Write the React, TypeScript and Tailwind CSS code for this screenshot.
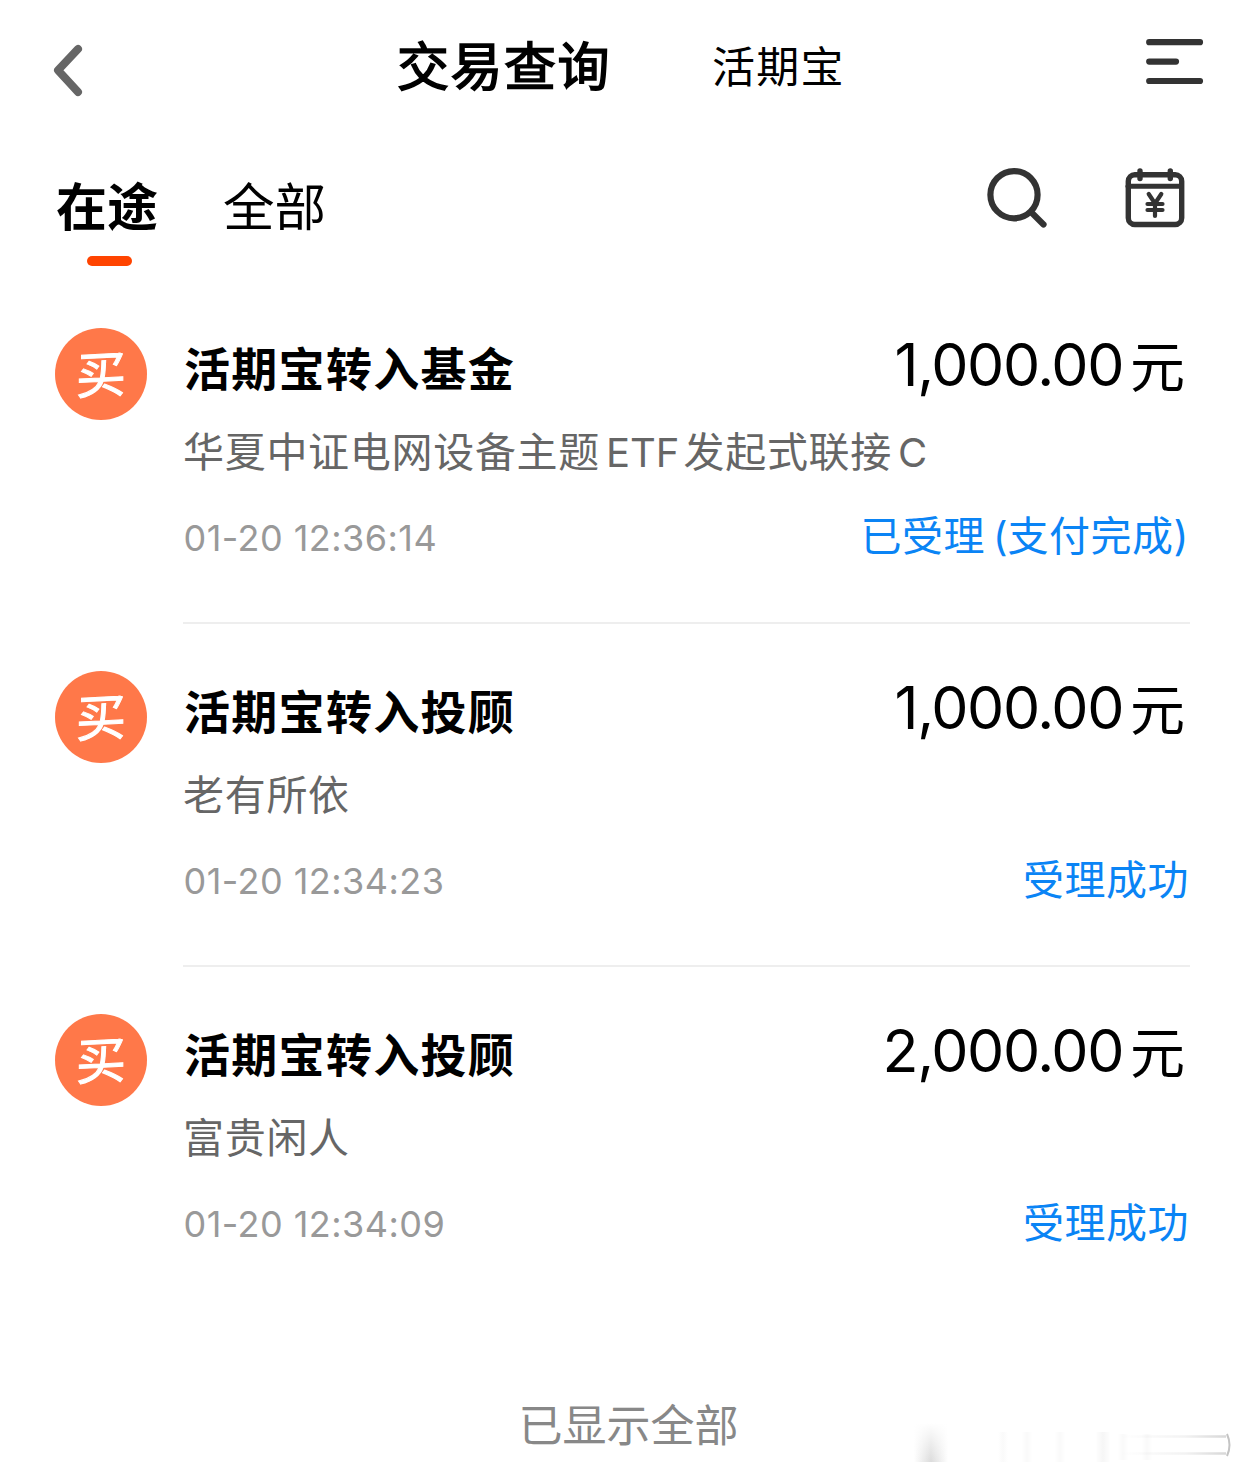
type Trade = {
  title: string
  product: string
  time: string
  amount: string
  status: string
}

const trades: Trade[] = [
  {
    title: "活期宝转入基金",
    product: "华夏中证电网设备主题ETF发起式联接C",
    time: "01-20 12:36:14",
    amount: "1,000.00",
    status: "已受理(支付完成)",
  },
  {
    title: "活期宝转入投顾",
    product: "老有所依",
    time: "01-20 12:34:23",
    amount: "1,000.00",
    status: "受理成功",
  },
  {
    title: "活期宝转入投顾",
    product: "富贵闲人",
    time: "01-20 12:34:09",
    amount: "2,000.00",
    status: "受理成功",
  },
]

function BackIcon() {
  return (
    <svg className="w-[32px] h-[54px]" viewBox="0 0 32 54" fill="none" stroke="#666" strokeWidth="8" strokeLinecap="round">
      <path d="M26 6 6 27.3 26 49" strokeLinejoin="round" />
    </svg>
  )
}

function MenuIcon() {
  return (
    <svg className="w-[58px] h-[46px]" viewBox="0 0 58 46" fill="none" stroke="#333" strokeWidth="6.2" strokeLinecap="round">
      <path d="M3.2 3.2H54M3.2 22.6H30M3.2 42H54" />
    </svg>
  )
}

function SearchIcon() {
  return (
    <svg className="w-[62px] h-[62px]" viewBox="0 0 62 62" fill="none" stroke="#333" strokeLinecap="round">
      <circle cx="28" cy="26.7" r="23.6" strokeWidth="6.2" />
      <path d="M45.5 44.5 57.5 56.5" strokeWidth="6.2" />
    </svg>
  )
}

function CalendarIcon() {
  return (
    <svg className="w-[60px] h-[60px]" viewBox="0 0 60 60" fill="none" stroke="#333" strokeLinecap="round">
      <rect x="3.3" y="6.7" width="53.4" height="49.8" rx="6.5" strokeWidth="5.4" />
      <path d="M3 18.3H56" strokeWidth="5" />
      <path d="M15 3V10.5M45.3 3V10.5" strokeWidth="5.4" />
      <path d="M23.7 26 30 35.5 36.3 26M30 35.5V48M22.5 36H37.5M22.5 42H37.5" strokeWidth="4.2" />
    </svg>
  )
}

// Adds a little air where Latin text meets Chinese text
function MixedText({ text }: { text: string }) {
  return (
    <>
      {text.split(/([A-Z]+|\()/).map((part, i) =>
        i % 2 === 1 ? (
          <span key={i} className={`text-[40px] tracking-normal ${part === "(" ? "ml-[8px]" : "mr-[4px] ml-[6px]"}`}>
            {part}
          </span>
        ) : (
          part
        ),
      )}
    </>
  )
}

function TradeItem({ trade, last }: { trade: Trade; last: boolean }) {
  return (
    <div className="flex h-[343px] pl-[55px] pr-[52px]">
      <div className="mt-[47px] mr-[36px] flex size-[92px] shrink-0 items-center justify-center rounded-full bg-[#ff7849]">
        <span className="-skew-x-3 -rotate-3 pt-[2px] text-[50px] leading-[94px] text-white [-webkit-text-stroke:1px_white]">买</span>
      </div>
      <div className={`flex-1 border-b-2 ${last ? "border-transparent" : "border-[#eeeeee]"}`}>
        <div className="mt-[48px] flex h-[80px] items-center justify-between pl-[1px]">
          <h2 className="text-[46px] leading-[80px] font-bold tracking-[1.3px]">{trade.title}</h2>
          <div className="flex items-start pr-[5px] pb-[4px]">
            <span className="text-[59px] leading-[69px] tracking-[-1.4px]">{trade.amount}</span>
            <span className="ml-[7px] text-[55px] leading-[74px]">元</span>
          </div>
        </div>
        <p className="h-[87px] text-[41px] leading-[87px] tracking-[0.7px] whitespace-nowrap text-[#666]">
          <MixedText text={trade.product} />
        </p>
        <div className="flex h-[82px] items-center justify-between">
          <span className="pt-[2px] pl-[0.5px] text-[36px] leading-[82px] tracking-[0.45px] text-[#999]">{trade.time}</span>
          <span className="pr-[1px] pb-[1px] text-[41px] leading-[80px] tracking-[0.5px] text-[#0a84f5]">
            <MixedText text={trade.status} />
          </span>
        </div>
      </div>
    </div>
  )
}

export default function App() {
  return (
    <div className="relative h-[1474px] w-[1242px] overflow-hidden bg-white font-['Inter','Noto_Sans_CJK_SC',sans-serif] text-black">
      {/* Header */}
      <header className="flex h-[134px] items-start pl-[52px]">
        <button className="mt-[43px]">
          <BackIcon />
        </button>
        <h1 className="ml-[313px] text-[52px] leading-[135px] tracking-[1.5px] [-webkit-text-stroke:1.6px_black]">交易查询</h1>
        <span className="ml-[101px] text-[43px] leading-[135px] tracking-[1.3px]">活期宝</span>
        <button className="mt-[39px] mr-[38px] ml-auto">
          <MenuIcon />
        </button>
      </header>

      {/* Tabs */}
      <div className="flex h-[147px] items-start pl-[56px]">
        <div className="flex flex-col items-center">
          <span className="h-[122px] text-[51px] leading-[147px] font-bold">在途</span>
          <span className="ml-[5px] h-[10px] w-[45px] rounded-full bg-[#ff4400]" />
        </div>
        <span className="ml-[65px] text-[51.5px] leading-[146px]">全部</span>
        <div className="mt-[34px] mr-[57px] ml-auto flex gap-[77px]">
          <SearchIcon />
          <CalendarIcon />
        </div>
      </div>

      {trades.map((trade, i) => (
        <TradeItem key={i} trade={trade} last={i === trades.length - 1} />
      ))}

      <p className="mt-[76px] pl-[15px] text-center text-[44px] leading-[80px] text-[#888]">已显示全部</p>

      {/* Faded corner mark */}
      <svg className="absolute right-0 bottom-0 h-[60px] w-[342px]" viewBox="0 0 342 60">
        <defs>
          <linearGradient id="smudge">
            <stop offset="0" stopColor="#999" stopOpacity="0" />
            <stop offset="0.5" stopColor="#999" stopOpacity="0.35" />
            <stop offset="1" stopColor="#999" stopOpacity="0" />
          </linearGradient>
          <linearGradient id="smudgeDown" x1="0" y1="0" x2="0" y2="1">
            <stop offset="0" stopColor="#fff" />
            <stop offset="1" stopColor="#fff" stopOpacity="0" />
          </linearGradient>
          <linearGradient id="edge" gradientUnits="userSpaceOnUse" x1="220" y1="0" x2="328" y2="0">
            <stop offset="0" stopColor="#999" stopOpacity="0" />
            <stop offset="0.6" stopColor="#999" stopOpacity="0.12" />
            <stop offset="1" stopColor="#999" stopOpacity="0.4" />
          </linearGradient>
        </defs>
        <rect x="14" y="9" width="34" height="39" fill="url(#smudge)" />
        <rect x="14" y="9" width="34" height="39" fill="url(#smudgeDown)" />
        <g fill="url(#smudge)" opacity="0.14">
          <rect x="98" y="18" width="10" height="30" />
          <rect x="122" y="18" width="10" height="30" />
          <rect x="155" y="18" width="10" height="30" />
          <rect x="196" y="18" width="14" height="30" />
          <rect x="196" y="18" width="14" height="30" />
          <rect x="218" y="20" width="10" height="26" />
          <rect x="242" y="20" width="10" height="26" />
        </g>
        <path d="M220 22.5H326M220 39.5H326" stroke="url(#edge)" strokeWidth="2.5" />
        <path d="M327 20Q332 31 327 42" fill="none" stroke="#c4c4c4" strokeWidth="2" />
      </svg>
    </div>
  )
}
